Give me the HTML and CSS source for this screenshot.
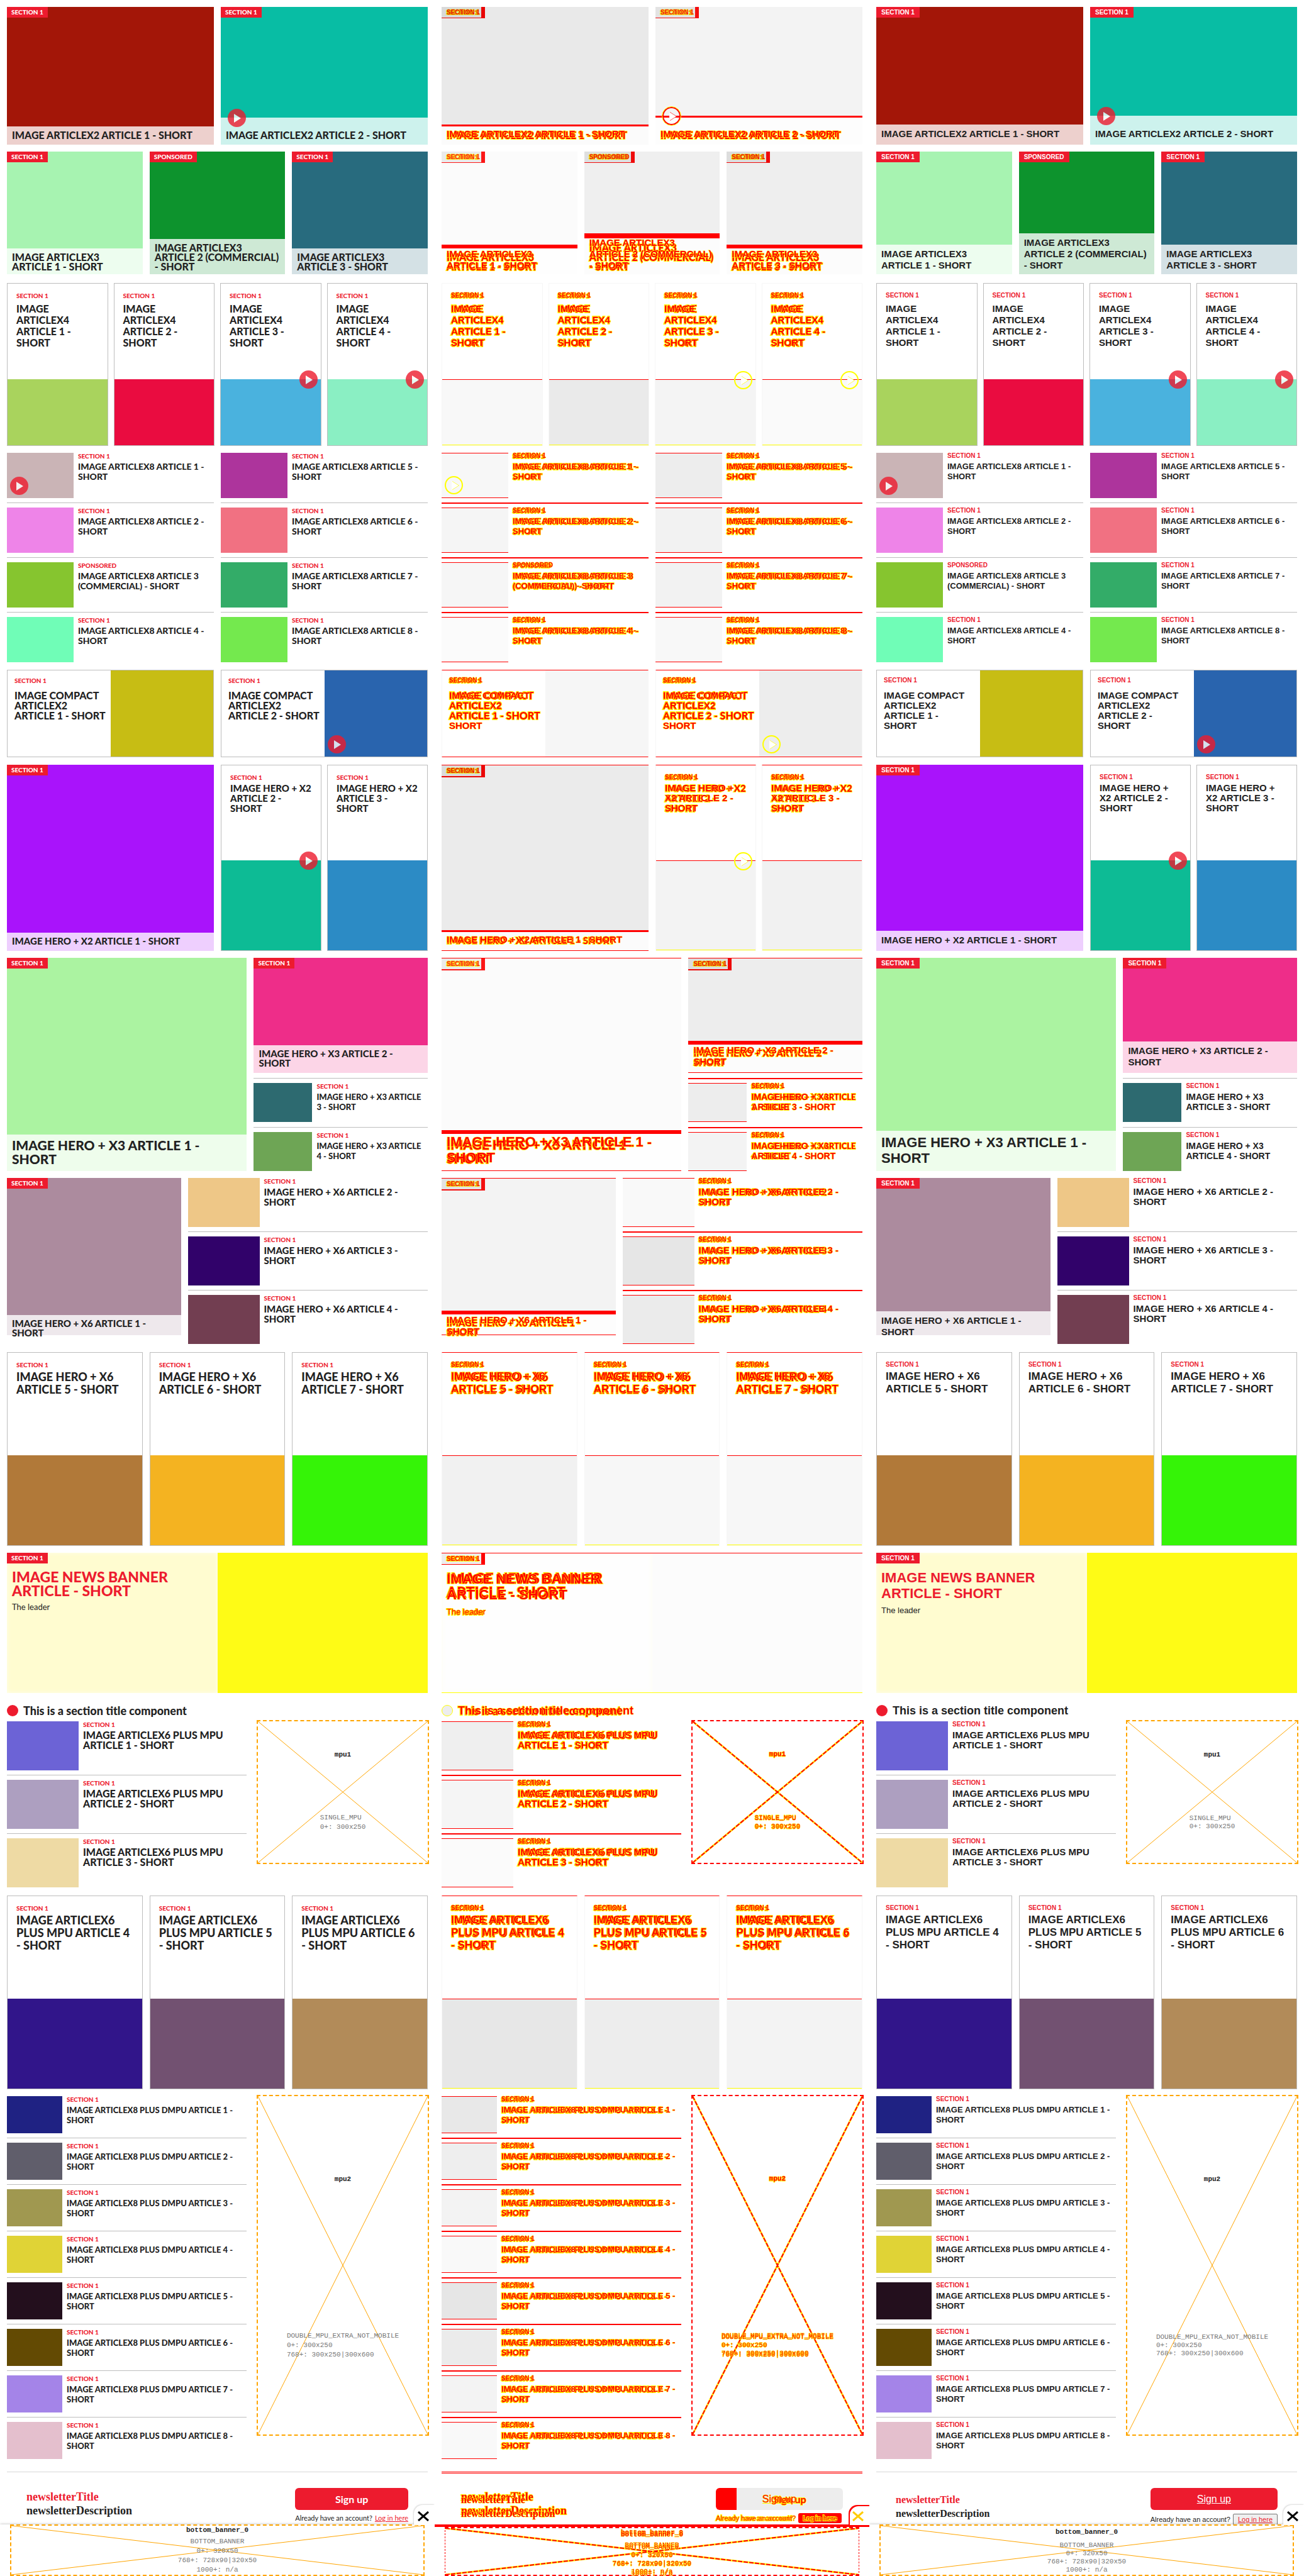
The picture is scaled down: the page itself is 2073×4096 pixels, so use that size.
FILE: index.html
```html
<!DOCTYPE html>
<html lang="en">
<head>
<meta charset="utf-8">
<title>Visual regression: section front</title>
<link rel="stylesheet" href="styles.css">
</head>
<body>
<main class="compare">
  <section class="panel panel--before" aria-label="Baseline"></section>
  <section class="panel panel--diff" aria-label="Difference"></section>
  <section class="panel panel--after" aria-label="Current"></section>
</main>

<template id="page">
  <div class="front">
    <div class="row row--x2">
      <article class="cover"><div class="fill" style="--c:#a31608"></div><p class="tag">SECTION 1</p><div class="caption"><h3>IMAGE ARTICLEX2 ARTICLE 1 - SHORT</h3></div></article>
      <article class="cover"><div class="fill" style="--c:#08bda4"></div><p class="tag">SECTION 1</p><div class="caption caption--video"><i class="play"></i><h3>IMAGE ARTICLEX2 ARTICLE 2 - SHORT</h3></div></article>
    </div>

    <div class="row row--x3">
      <article class="cover"><div class="fill" style="--c:#a7f3b1"></div><p class="tag">SECTION 1</p><div class="caption caption--two"><h3>IMAGE ARTICLEX3 ARTICLE 1 - SHORT</h3></div></article>
      <article class="cover"><div class="fill" style="--c:#0d932d"></div><p class="tag">SPONSORED</p><div class="caption caption--three"><h3>IMAGE ARTICLEX3 ARTICLE 2 (COMMERCIAL) - SHORT</h3></div></article>
      <article class="cover"><div class="fill" style="--c:#286b7e"></div><p class="tag">SECTION 1</p><div class="caption caption--two"><h3>IMAGE ARTICLEX3 ARTICLE 3 - SHORT</h3></div></article>
    </div>

    <div class="row row--x4">
      <article class="card"><div class="copy"><p class="kicker">SECTION 1</p><h3>IMAGE ARTICLEX4 ARTICLE 1 - SHORT</h3></div><div class="pic"><div class="fill" style="--c:#a9d35d"></div></div></article>
      <article class="card"><div class="copy"><p class="kicker">SECTION 1</p><h3>IMAGE ARTICLEX4 ARTICLE 2 - SHORT</h3></div><div class="pic"><div class="fill" style="--c:#ea0c40"></div></div></article>
      <article class="card"><div class="copy"><p class="kicker">SECTION 1</p><h3>IMAGE ARTICLEX4 ARTICLE 3 - SHORT</h3></div><div class="pic"><div class="fill" style="--c:#4ab2de"></div><i class="play"></i></div></article>
      <article class="card"><div class="copy"><p class="kicker">SECTION 1</p><h3>IMAGE ARTICLEX4 ARTICLE 4 - SHORT</h3></div><div class="pic"><div class="fill" style="--c:#8aefc3"></div><i class="play"></i></div></article>
    </div>

    <div class="row row--x8">
      <div class="list">
        <article class="item"><div class="pic"><div class="fill" style="--c:#cab4b6"></div><i class="play"></i></div><div class="copy"><p class="kicker">SECTION 1</p><h3>IMAGE ARTICLEX8 ARTICLE 1 - SHORT</h3></div></article>
        <article class="item"><div class="pic"><div class="fill" style="--c:#ee84e8"></div></div><div class="copy"><p class="kicker">SECTION 1</p><h3>IMAGE ARTICLEX8 ARTICLE 2 - SHORT</h3></div></article>
        <article class="item"><div class="pic"><div class="fill" style="--c:#86c52f"></div></div><div class="copy"><p class="kicker">SPONSORED</p><h3>IMAGE ARTICLEX8 ARTICLE 3 (COMMERCIAL) - SHORT</h3></div></article>
        <article class="item"><div class="pic"><div class="fill" style="--c:#70fdb7"></div></div><div class="copy"><p class="kicker">SECTION 1</p><h3>IMAGE ARTICLEX8 ARTICLE 4 - SHORT</h3></div></article>
      </div>
      <div class="list">
        <article class="item"><div class="pic"><div class="fill" style="--c:#ad349c"></div></div><div class="copy"><p class="kicker">SECTION 1</p><h3>IMAGE ARTICLEX8 ARTICLE 5 - SHORT</h3></div></article>
        <article class="item"><div class="pic"><div class="fill" style="--c:#f17182"></div></div><div class="copy"><p class="kicker">SECTION 1</p><h3>IMAGE ARTICLEX8 ARTICLE 6 - SHORT</h3></div></article>
        <article class="item"><div class="pic"><div class="fill" style="--c:#33ac68"></div></div><div class="copy"><p class="kicker">SECTION 1</p><h3>IMAGE ARTICLEX8 ARTICLE 7 - SHORT</h3></div></article>
        <article class="item"><div class="pic"><div class="fill" style="--c:#74e94e"></div></div><div class="copy"><p class="kicker">SECTION 1</p><h3>IMAGE ARTICLEX8 ARTICLE 8 - SHORT</h3></div></article>
      </div>
    </div>

    <div class="row row--compact">
      <article class="card card--side"><div class="copy"><p class="kicker">SECTION 1</p><h3>IMAGE COMPACT ARTICLEX2 ARTICLE 1 - SHORT</h3></div><div class="pic"><div class="fill" style="--c:#c7bd14"></div></div></article>
      <article class="card card--side"><div class="copy"><p class="kicker">SECTION 1</p><h3>IMAGE COMPACT ARTICLEX2 ARTICLE 2 - SHORT</h3></div><div class="pic"><div class="fill" style="--c:#2964ae"></div><i class="play"></i></div></article>
    </div>

    <div class="row row--hero2">
      <article class="cover cover--shifted"><div class="fill" style="--c:#a913fb"></div><p class="tag">SECTION 1</p><div class="caption"><h3>IMAGE HERO + X2 ARTICLE 1 - SHORT</h3></div></article>
      <div class="pair">
        <article class="card"><div class="copy"><p class="kicker">SECTION 1</p><h3>IMAGE HERO + X2 ARTICLE 2 - SHORT</h3></div><div class="pic"><div class="fill" style="--c:#0dbb95"></div><i class="play"></i></div></article>
        <article class="card"><div class="copy"><p class="kicker">SECTION 1</p><h3>IMAGE HERO + X2 ARTICLE 3 - SHORT</h3></div><div class="pic"><div class="fill" style="--c:#2c8bc5"></div></div></article>
      </div>
    </div>

    <div class="row row--hero3">
      <article class="cover cover--shifted cover--lead"><div class="fill" style="--c:#abf3a1"></div><p class="tag">SECTION 1</p><div class="caption caption--two"><h3>IMAGE HERO + X3 ARTICLE 1 - SHORT</h3></div></article>
      <div class="list">
        <article class="cover cover--shifted"><div class="fill" style="--c:#ee2d89"></div><p class="tag">SECTION 1</p><div class="caption caption--two"><h3>IMAGE HERO + X3 ARTICLE 2 - SHORT</h3></div></article>
        <article class="item"><div class="pic"><div class="fill" style="--c:#2d6a70"></div></div><div class="copy"><p class="kicker">SECTION 1</p><h3>IMAGE HERO + X3 ARTICLE 3 - SHORT</h3></div></article>
        <article class="item"><div class="pic"><div class="fill" style="--c:#6ea555"></div></div><div class="copy"><p class="kicker">SECTION 1</p><h3>IMAGE HERO + X3 ARTICLE 4 - SHORT</h3></div></article>
      </div>
    </div>

    <div class="row row--hero6">
      <article class="cover cover--shifted cover--short"><div class="fill" style="--c:#ac8b9e"></div><p class="tag">SECTION 1</p><div class="caption caption--two"><h3>IMAGE HERO + X6 ARTICLE 1 - SHORT</h3></div></article>
      <div class="list">
        <article class="item"><div class="pic"><div class="fill" style="--c:#eec787"></div></div><div class="copy"><p class="kicker">SECTION 1</p><h3>IMAGE HERO + X6 ARTICLE 2 - SHORT</h3></div></article>
        <article class="item"><div class="pic"><div class="fill" style="--c:#31026a"></div></div><div class="copy"><p class="kicker">SECTION 1</p><h3>IMAGE HERO + X6 ARTICLE 3 - SHORT</h3></div></article>
        <article class="item"><div class="pic"><div class="fill" style="--c:#723e51"></div></div><div class="copy"><p class="kicker">SECTION 1</p><h3>IMAGE HERO + X6 ARTICLE 4 - SHORT</h3></div></article>
      </div>
    </div>

    <div class="row row--tall3">
      <article class="card"><div class="copy"><p class="kicker">SECTION 1</p><h3>IMAGE HERO + X6 ARTICLE 5 - SHORT</h3></div><div class="pic"><div class="fill" style="--c:#b17939"></div></div></article>
      <article class="card"><div class="copy"><p class="kicker">SECTION 1</p><h3>IMAGE HERO + X6 ARTICLE 6 - SHORT</h3></div><div class="pic"><div class="fill" style="--c:#f4b321"></div></div></article>
      <article class="card"><div class="copy"><p class="kicker">SECTION 1</p><h3>IMAGE HERO + X6 ARTICLE 7 - SHORT</h3></div><div class="pic"><div class="fill" style="--c:#35f407"></div></div></article>
    </div>

    <article class="news">
      <div class="news__copy"><p class="tag">SECTION 1</p><h3>IMAGE NEWS BANNER ARTICLE - SHORT</h3><p class="leader">The leader</p></div>
      <div class="pic"><div class="fill" style="--c:#fefb16"></div></div>
    </article>

    <div class="heading"><span class="dot"></span><h2>This is a section title component</h2></div>

    <div class="row row--mpu">
      <div class="list">
        <article class="item"><div class="pic"><div class="fill" style="--c:#6c63d6"></div></div><div class="copy"><p class="kicker">SECTION 1</p><h3>IMAGE ARTICLEX6 PLUS MPU ARTICLE 1 - SHORT</h3></div></article>
        <article class="item"><div class="pic"><div class="fill" style="--c:#ad9fc0"></div></div><div class="copy"><p class="kicker">SECTION 1</p><h3>IMAGE ARTICLEX6 PLUS MPU ARTICLE 2 - SHORT</h3></div></article>
        <article class="item"><div class="pic"><div class="fill" style="--c:#eedaa4"></div></div><div class="copy"><p class="kicker">SECTION 1</p><h3>IMAGE ARTICLEX6 PLUS MPU ARTICLE 3 - SHORT</h3></div></article>
      </div>
      <aside class="ad">
        <svg class="cross" viewBox="0 0 100 100" preserveAspectRatio="none"><path class="halo" d="M0 0L100 100M0 100L100 0"/><path d="M0 0L100 100M0 100L100 0"/></svg>
        <p class="ad__name">mpu1</p>
        <p class="ad__sizes">SINGLE_MPU<br>0+: 300x250</p>
      </aside>
    </div>

    <div class="row row--tall3 row--after-list">
      <article class="card"><div class="copy"><p class="kicker">SECTION 1</p><h3>IMAGE ARTICLEX6 PLUS MPU ARTICLE 4 - SHORT</h3></div><div class="pic"><div class="fill" style="--c:#31158a"></div></div></article>
      <article class="card"><div class="copy"><p class="kicker">SECTION 1</p><h3>IMAGE ARTICLEX6 PLUS MPU ARTICLE 5 - SHORT</h3></div><div class="pic"><div class="fill" style="--c:#725171"></div></div></article>
      <article class="card"><div class="copy"><p class="kicker">SECTION 1</p><h3>IMAGE ARTICLEX6 PLUS MPU ARTICLE 6 - SHORT</h3></div><div class="pic"><div class="fill" style="--c:#b28b59"></div></div></article>
    </div>

    <div class="row row--dmpu">
      <div class="list">
        <article class="item"><div class="pic"><div class="fill" style="--c:#1f2283"></div></div><div class="copy"><p class="kicker">SECTION 1</p><h3>IMAGE ARTICLEX8 PLUS DMPU ARTICLE 1 - SHORT</h3></div></article>
        <article class="item"><div class="pic"><div class="fill" style="--c:#605e6b"></div></div><div class="copy"><p class="kicker">SECTION 1</p><h3>IMAGE ARTICLEX8 PLUS DMPU ARTICLE 2 - SHORT</h3></div></article>
        <article class="item"><div class="pic"><div class="fill" style="--c:#a09850"></div></div><div class="copy"><p class="kicker">SECTION 1</p><h3>IMAGE ARTICLEX8 PLUS DMPU ARTICLE 3 - SHORT</h3></div></article>
        <article class="item"><div class="pic"><div class="fill" style="--c:#e0d336"></div></div><div class="copy"><p class="kicker">SECTION 1</p><h3>IMAGE ARTICLEX8 PLUS DMPU ARTICLE 4 - SHORT</h3></div></article>
        <article class="item"><div class="pic"><div class="fill" style="--c:#230f1d"></div></div><div class="copy"><p class="kicker">SECTION 1</p><h3>IMAGE ARTICLEX8 PLUS DMPU ARTICLE 5 - SHORT</h3></div></article>
        <article class="item"><div class="pic"><div class="fill" style="--c:#634a03"></div></div><div class="copy"><p class="kicker">SECTION 1</p><h3>IMAGE ARTICLEX8 PLUS DMPU ARTICLE 6 - SHORT</h3></div></article>
        <article class="item"><div class="pic"><div class="fill" style="--c:#a484e8"></div></div><div class="copy"><p class="kicker">SECTION 1</p><h3>IMAGE ARTICLEX8 PLUS DMPU ARTICLE 7 - SHORT</h3></div></article>
        <article class="item"><div class="pic"><div class="fill" style="--c:#e4bfcd"></div></div><div class="copy"><p class="kicker">SECTION 1</p><h3>IMAGE ARTICLEX8 PLUS DMPU ARTICLE 8 - SHORT</h3></div></article>
      </div>
      <aside class="ad ad--tall">
        <svg class="cross" viewBox="0 0 100 100" preserveAspectRatio="none"><path class="halo" d="M0 0L100 100M0 100L100 0"/><path d="M0 0L100 100M0 100L100 0"/></svg>
        <p class="ad__name">mpu2</p>
        <p class="ad__sizes">DOUBLE_MPU_EXTRA_NOT_MOBILE<br>0+: 300x250<br>768+: 300x250|300x600</p>
      </aside>
    </div>

    <section class="newsletter">
      <div class="newsletter__copy">
        <p class="newsletter__title">newsletterTitle</p>
        <p class="newsletter__text">newsletterDescription</p>
      </div>
      <div class="signup">
        <button class="signup__button" type="button">Sign up</button>
        <p class="signup__login"><span class="ask">Already have an account?</span> <a class="login" href="#login">Log in here</a></p>
      </div>
    </section>
  </div>

  <aside class="banner">
    <button class="close" type="button" aria-label="Close"><svg viewBox="0 0 18 16"><path d="M1 1L17 15M17 1L1 15"/></svg></button>
    <div class="banner__slot">
      <svg class="cross" viewBox="0 0 100 100" preserveAspectRatio="none"><path class="halo" d="M0 0L100 100M0 100L100 0"/><path d="M0 0L100 100M0 100L100 0"/></svg>
      <p class="banner__name">bottom_banner_0</p>
      <p class="banner__sizes">BOTTOM_BANNER<br>0+: 320x50<br>768+: 728x90|320x50<br>1000+: n/a</p>
    </div>
  </aside>
</template>
<script src="compare.js"></script>
</body>
</html>
```

FILE: compare.js
```js
// Fills the three panels from one page template. Every text gets the
// baseline face, the current face, or (in the diff) both, stacked.
const layers = { before: ['was'], diff: ['was', 'now'], after: ['now'] };
const texts = 'h2, h3, .tag, .kicker, .leader, .ad__name, .ad__sizes, .newsletter__title,' +
  '.newsletter__text, .signup__button, .ask, .login, .banner__name, .banner__sizes';

for (const [name, faces] of Object.entries(layers)) {
  const panel = document.querySelector('.panel--' + name);
  panel.append(document.getElementById('page').content.cloneNode(true));
  for (const el of panel.querySelectorAll(texts)) {
    const html = el.innerHTML;
    el.classList.add('text');
    el.innerHTML = faces.map(face => `<span class="${face}">${html}</span>`).join('');
  }
}
```

FILE: styles.css
```css
:root {
  --red: #ed1b2e;
  --ink: #222;
  --rule: #bdbdbd;
  --hit: #f00;
  --soft: #ff0;
}

* { box-sizing: border-box; }
body { margin: 0; background: #fff; color: var(--ink); }
h2, h3, p { margin: 0; font-weight: inherit; font-size: inherit; }

.compare { display: grid; grid-template-columns: repeat(3, minmax(0, 1fr)); }
.panel { display: flex; flex-direction: column; overflow: hidden; }
.front { padding: 11px 11px 0; }

/* Stacked text faces */
.text { display: grid; --lh-was: 16px; --lh-now: 16px; }
.was, .now { grid-area: 1 / 1; }
.was { font-family: Lato, "Open Sans", sans-serif; font-weight: 900; line-height: var(--lh-was); }
.now { font-family: "Liberation Sans", Arial, sans-serif; font-weight: 700; line-height: var(--lh-now); }
h3 { font-size: 15px; }
h3 .was { font-size: 16px; }

/* Shared pieces */
.fill { background: var(--c); }
.pic { position: relative; display: grid; }
.tag, .kicker { font-size: 10px; }
.tag { justify-self: start; background: var(--red); color: #fff; padding: 0 7px; --lh-was: 17px; --lh-now: 17px; }
.panel--after .tag { padding: 0 8px; }
.kicker { color: var(--red); --lh-was: 10px; --lh-now: 10px; }
.play {
  position: absolute; left: 5px; bottom: 5px; width: 29px; height: 29px;
  border-radius: 50%; background: var(--red); opacity: .8;
}
.play::after {
  content: ""; position: absolute; left: 10px; top: 8px;
  border: 7px solid transparent; border-left: 11px solid #fff; border-right: 0;
}

/* Picture with an overlaid caption */
.cover { display: grid; min-height: 0; }
.cover > .fill { grid-area: 1 / 1; }
.cover > .tag { grid-area: 1 / 1; align-self: start; }
.cover > .caption { grid-area: 1 / 1; align-self: end; }
.caption { position: relative; padding: 6px 8px 8px; background: rgba(255, 255, 255, .8); --band: 3px; }
.caption h3 { align-items: end; --lh-was: 15px; --lh-now: 18px; }
.caption--video { padding-top: 20px; }
.caption--video .play { left: 11px; top: -14px; }
.caption--two { --band: 6px; }
.caption--three { --band: 8px; }

/* Bordered card, copy above picture */
.card { display: flex; flex-direction: column; border: 1px solid var(--rule); }
.card .copy { flex: 1; padding: 13px 14px 0; }
.card .kicker { --lh-was: 12px; --lh-now: 12px; }
.card h3 { margin-top: 3px; }
.card .pic { height: 105px; }
.card .play { left: auto; right: 5px; top: -14px; }
.card--side { display: grid; grid-template-columns: 1fr 1fr; }
.card--side .copy { padding: 10px 10px 0 11px; }
.card--side h3 { margin-top: 10px; }
.card--side h3 .was { margin-right: -6px; }
.card--side .pic { height: auto; }
.card--side .play { left: 5px; right: auto; top: auto; }

/* Picture beside copy, ruled list */
.list { display: flex; flex-direction: column; gap: 7px; --pic-w: 114px; --pic-h: 78px; }
.item { display: grid; grid-template-columns: var(--pic-w) 1fr; gap: 7px; }
.item + .item, .cover + .item { border-top: 1px solid var(--rule); padding-top: 7px; }
.item .pic { height: var(--pic-h); }
.item h3 { margin-top: 4px; }

/* Rows */
.row { display: grid; gap: 11px; margin-bottom: 11px; }
.row--x2 { grid-template-columns: 1fr 1fr; height: 219px; }
.row--x3 { grid-template-columns: repeat(3, 1fr); height: 195px; margin-bottom: 14px; }
.row--x3 .caption { padding-bottom: 5px; }
.row--x4 { grid-template-columns: repeat(4, 1fr); gap: 9px; height: 259px; }
.row--x4 h3 { margin-top: 6px; --lh-was: 18px; --lh-now: 18px; }
.row--x8 { grid-template-columns: 1fr 1fr; margin-bottom: 12px; }
.row--x8 .list { --pic-w: 106px; --pic-h: 72px; }
.row--x8 h3 { font-size: 13px; }
.row--x8 h3 .was { font-size: 14px; }
.row--compact { grid-template-columns: 1fr 1fr; height: 139px; margin-bottom: 12px; }
.row--hero2 { grid-template-columns: 1fr 1fr; height: 296px; }
.row--hero2 h3 .was, .row--hero3 h3 .was, .row--hero6 h3 .was { font-size: 15px; }
.pair { display: grid; grid-template-columns: 1fr 1fr; gap: 9px; }
.pair .card .pic { height: 143px; }
.row--hero3 { grid-template-columns: 382fr 277fr; height: 339px; }
.row--hero3 .list { gap: 8px; --pic-w: 93px; --pic-h: 62px; }
.row--hero3 .list .cover { flex: 1; }
.row--hero3 .item h3 .was { font-size: 13px; }
.row--hero3 .item h3 .now { font-size: 14px; }
.cover--lead h3 { font-size: 22px; --lh-was: 22px; --lh-now: 25px; }
.row--hero3 .cover--lead h3 .was { font-size: 21px; }
.row--hero6 { grid-template-columns: 277fr 382fr; margin-bottom: 13px; }
.cover--short { height: 250px; }
.cover--short .caption { height: 32px; }
.panel:not(.panel--before) .cover--short .caption { height: 38px; }
.row--tall3 { grid-template-columns: repeat(3, 1fr); height: 308px; }
.row--tall3 h3 { font-size: 17px; --lh-was: 20px; --lh-now: 20px; }
.row--tall3 h3 .was { font-size: 18px; }
.row--tall3 .pic { height: 143px; }
.row--mpu, .row--dmpu { grid-template-columns: 381px 274px; justify-content: space-between; margin-right: -2px; }
.row--mpu { margin-bottom: 13px; }
.row--dmpu .list { --pic-w: 88px; --pic-h: 59px; }
.row--dmpu h3, .row--dmpu h3 .was { font-size: 13px; }

/* News banner */
.news { display: grid; grid-template-columns: 1fr 1fr; height: 223px; margin-bottom: 19px; }
.news__copy { display: grid; align-content: start; background: #fffcd0; box-shadow: inset 0 0 7px rgba(255, 255, 240, .9); }
.news__copy h3 { color: var(--red); font-size: 22px; padding: 10px 60px 0 8px; --lh-was: 22px; --lh-now: 25px; }
.news__copy h3 .was { font-size: 23px; }
.leader { font-size: 13px; padding: 6px 8px; --lh-was: 18px; --lh-now: 18px; }
.leader span { font-weight: 400; }

/* Section heading */
.heading { display: flex; align-items: center; gap: 8px; height: 18px; margin-bottom: 8px; }
.dot { width: 18px; height: 18px; border-radius: 50%; background: var(--red); }
h2 { font-size: 18px; --lh-was: 18px; --lh-now: 18px; }

/* Ad slots */
.ad {
  position: relative; display: grid; grid-template-rows: 1fr 1fr; place-items: center;
  height: 229px; margin-top: -2px; padding-bottom: 10px; border: 2px dashed #ffa500; background: #fff;
}
.ad--tall { height: 542px; }
.cross { position: absolute; left: 0; top: 0; width: 100%; height: 100%; fill: none; stroke: #ffa500; }
.cross path { vector-effect: non-scaling-stroke; }
.cross .halo { stroke: none; }
.ad p, .banner p { position: relative; font-size: 11px; --lh-was: 15px; --lh-now: 13px; }
.ad span, .banner span { font-family: "Liberation Mono", "Courier New", monospace; font-weight: 400; }
.ad .ad__name span, .banner .banner__name span { font-weight: 700; }
.ad__sizes, .banner__sizes { color: #777; }
.ad__sizes span, .banner__sizes span { align-self: center; }

/* Newsletter */
.newsletter {
  display: flex; justify-content: space-between; align-items: flex-start;
  height: 84px; margin-top: 20px; padding: 25px 31px 0; border-top: 1px solid #d8d8d8;
}
.newsletter__copy { padding-top: 3px; }
.newsletter__copy .text { --lh-was: 22px; --lh-now: 22px; }
.newsletter__copy span { font-family: "Liberation Serif", "Times New Roman", serif; font-weight: 700; }
.newsletter__copy .was { font-size: 18px; }
.newsletter__copy .now { font-size: 16px; margin-top: 5px; margin-bottom: -5px; }
.newsletter__title { color: var(--red); }
.signup { display: flex; flex-direction: column; }
.signup__button {
  height: 35px; padding: 0; border: 0; border-radius: 6px; background: var(--red); color: #fff;
  font-size: 16px; place-content: center; justify-items: center;
}
.signup__button .was { font-weight: 700; }
.signup__button .now { font-weight: 400; text-decoration: underline; }
.signup__login { display: flex; align-items: center; gap: 4px; padding-top: 5px; font-size: 11px; }
.signup__login span { font-weight: 400; white-space: nowrap; }
.login { color: var(--red); }
.panel--after .signup__login { padding-top: 6px; }
.panel--after .login { border: 1px solid #767676; border-radius: 2px; background: #efefef; padding: 0 7px; }

/* Bottom banner */
.banner { position: relative; background: #fff; height: 83px; padding: 0 16px; box-shadow: 0 0 4px rgba(0, 0, 0, .3); border-bottom: 1px solid #999; }
.banner__slot { position: relative; height: 82px; border: 2px dashed #ffa500; text-align: center; }
.banner__name { margin-bottom: 3px; }
.panel--after .banner__name { padding-top: 4px; margin-bottom: 8px; }
.close {
  position: absolute; right: 0; top: -31px; width: 33px; height: 32px; padding: 6px 6px 0 2px; z-index: 1;
  border: 0; border-radius: 14px 0 0 0; background: #fff; box-shadow: -1px -1px 2px rgba(0, 0, 0, .15);
}
.close svg { width: 18px; height: 16px; stroke: #000; stroke-width: 3; }

/* Diff rendering: unchanged pixels fade, changed ones burn in */
.panel--diff .fill { filter: grayscale(1); opacity: .1; }
.panel--diff .was, .panel--diff .now { color: var(--hit); paint-order: stroke fill; -webkit-text-stroke: 2px var(--soft); }
.panel--diff .now { -webkit-text-stroke-width: 1px; }
.panel--diff .tag {
  padding: 0 8px; border-bottom: 1px solid var(--hit);
  background: linear-gradient(to left, var(--hit) 6px, #ededed 6px);
}
.panel--diff .cover--shifted { border: solid var(--hit); border-width: 1px 0; }
.panel--diff .cover--shifted .tag { border-bottom-width: 2px; }
.panel--diff .caption { box-shadow: inset 0 var(--band) var(--hit); }
.panel--diff .card { border-color: #f6f6f6; }
.panel--diff .card .pic { border-top: 1px solid var(--hit); border-bottom: 1px solid var(--soft); }
.panel--diff .row:not(.row--x4) .card { border-top-color: var(--hit); }
.panel--diff .card--side { border-bottom-color: var(--hit); }
.panel--diff .card--side .pic { border: 0; }
.panel--diff .item .pic { border: solid var(--hit); border-width: 1px 0; }
.panel--diff .item + .item, .panel--diff .cover + .item { border-top: 2px solid var(--hit); padding-top: 6px; }
.panel--diff .play { background: none; border: 2px solid var(--soft); opacity: 1; }
.panel--diff .play::after { left: 9px; top: 6px; border-left-color: #fff; filter: drop-shadow(1px 0 var(--soft)); }
.panel--diff .caption .play { border-color: var(--hit); outline: 1px solid var(--soft); }
.panel--diff .caption .play::after { filter: drop-shadow(1px 0 var(--hit)); }
.panel--diff .news { border-top: 1px solid var(--hit); border-bottom: 1px solid var(--soft); }
.panel--diff .news__copy { background: #fefefe; }
.panel--diff .dot { background: #ededed; border: 1px solid var(--soft); }
.panel--diff .ad, .panel--diff .banner__slot { border-color: var(--hit); }
.panel--diff .cross { stroke: var(--hit); stroke-dasharray: 7 2; stroke-width: 2; }
.panel--diff .cross .halo { stroke: var(--soft); stroke-dasharray: none; stroke-width: 3; }
.panel--diff .ad span, .panel--diff .banner span { -webkit-text-stroke-width: 1px; }
.panel--diff .newsletter { border-top: 3px double var(--hit); padding-top: 23px; }
.panel--diff .signup__button { background: linear-gradient(to right, var(--hit) 33px, #ededed 33px); }
.panel--diff .signup__button .was { padding-left: 33px; }
.panel--diff .signup__login { width: 202px; }
.panel--diff .login { background: var(--hit); padding: 0 7px; border-radius: 3px; }
.panel--diff .banner { box-shadow: none; border-top: 4px solid var(--hit); border-bottom-color: var(--hit); }
.panel--diff .banner__slot { height: 78px; border-width: 2px 1px; }
.panel--diff .banner__name .now { padding-top: 4px; }
.panel--diff .close { top: -35px; box-shadow: inset 2px 2px var(--hit); }
.panel--diff .close svg { stroke: #fc0; }
```
